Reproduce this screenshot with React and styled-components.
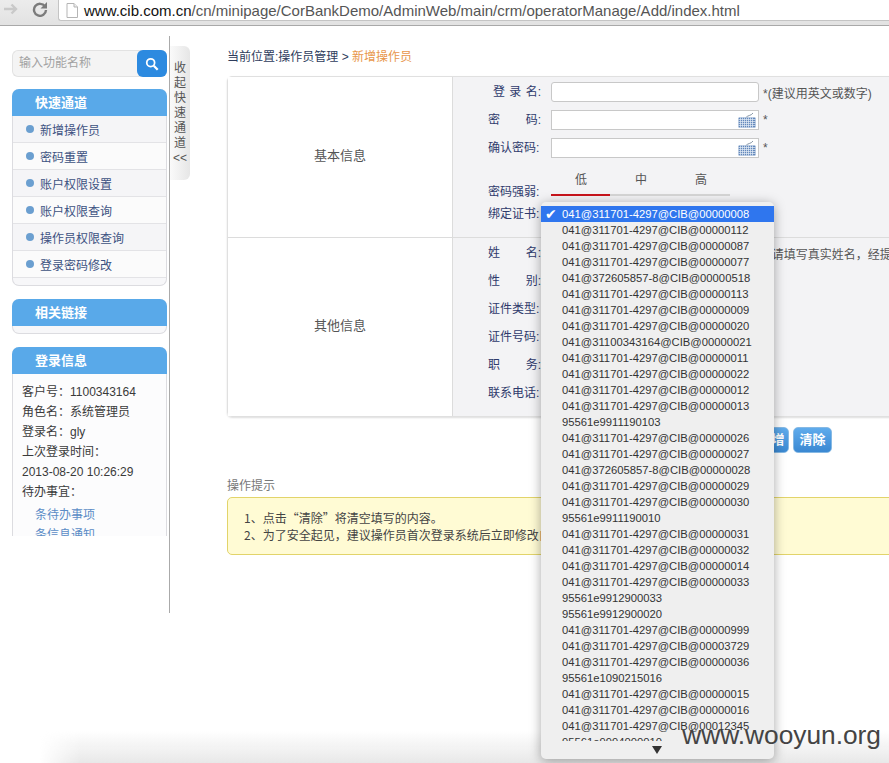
import styled, { createGlobalStyle } from "styled-components";

const quickLinks = ["新增操作员", "密码重置", "账户权限设置", "账户权限查询", "操作员权限查询", "登录密码修改"];

const loginInfo = ["客户号：1100343164", "角色名：系统管理员", "登录名：gly", "上次登录时间：", "2013-08-20 10:26:29", "待办事宜："];

const otherFields = [
  { label: "姓 名:", hint: "*(请填写真实姓名，经提交后不可修改)" },
  { label: "性 别:" },
  { label: "证件类型:" },
  { label: "证件号码:" },
  { label: "职 务:" },
  { label: "联系电话:" },
];

const certs = [
  "041@311701-4297@CIB@00000008",
  "041@311701-4297@CIB@00000112",
  "041@311701-4297@CIB@00000087",
  "041@311701-4297@CIB@00000077",
  "041@372605857-8@CIB@00000518",
  "041@311701-4297@CIB@00000113",
  "041@311701-4297@CIB@00000009",
  "041@311701-4297@CIB@00000020",
  "041@31100343164@CIB@00000021",
  "041@311701-4297@CIB@00000011",
  "041@311701-4297@CIB@00000022",
  "041@311701-4297@CIB@00000012",
  "041@311701-4297@CIB@00000013",
  "95561e9911190103",
  "041@311701-4297@CIB@00000026",
  "041@311701-4297@CIB@00000027",
  "041@372605857-8@CIB@00000028",
  "041@311701-4297@CIB@00000029",
  "041@311701-4297@CIB@00000030",
  "95561e9911190010",
  "041@311701-4297@CIB@00000031",
  "041@311701-4297@CIB@00000032",
  "041@311701-4297@CIB@00000014",
  "041@311701-4297@CIB@00000033",
  "95561e9912900033",
  "95561e9912900020",
  "041@311701-4297@CIB@00000999",
  "041@311701-4297@CIB@00003729",
  "041@311701-4297@CIB@00000036",
  "95561e1090215016",
  "041@311701-4297@CIB@00000015",
  "041@311701-4297@CIB@00000016",
  "041@311701-4297@CIB@00012345",
  "95561e9994000010",
];

function KeyboardIcon() {
  return (
    <KeyboardSvg viewBox="0 0 18 16">
      <path d="M8 5.500 C10 3 13 4 15 1" fill="none" stroke="#77899b" strokeWidth="0.9" />
      <rect x="0.5" y="5.500" width="17" height="10" rx="0.5" fill="#6388bb" />
      <path
        d="M0.5 7.500h17M0.5 9.500h17M0.5 11.500h17M0.5 13.500h17M2.500 5.500v10M4.500 5.500v10M6.500 5.500v10M8.500 5.500v10M10.500 5.500v10M12.500 5.500v10M14.500 5.500v10"
        stroke="#e4edf6"
        strokeWidth="0.7"
      />
    </KeyboardSvg>
  );
}

function Field({ label, indent, children }) {
  return (
    <FieldRow>
      <Label $indent={indent}>
        {label.split(" ").map((part) => (
          <span key={part}>{part}</span>
        ))}
      </Label>
      {children}
    </FieldRow>
  );
}

export default function App() {
  return (
    <Page>
      <GlobalStyle />
      <TopBar>
        <NavIcon viewBox="0 0 16 16" width="16" height="16">
          <path d="M1 8h12M8.500 3.500 13 8l-4.500 4.500" fill="none" stroke="#c9c9c9" strokeWidth="2.400" />
        </NavIcon>
        <NavIcon viewBox="0 0 16 16" width="16" height="16" $gap={13}>
          <path d="M13 5.500A6 6 0 1 0 14 9" fill="none" stroke="#7b7b7b" strokeWidth="2.400" />
          <path d="M15 1v6.500H8.500z" fill="#7b7b7b" />
        </NavIcon>
        <UrlBox>
          <svg viewBox="0 0 12 15" width="12" height="15">
            <path d="M1 .5h7l3.500 3.500v10.500H1z" fill="#fff" stroke="#b5b5b5" />
            <path d="M8 .5V4h3.500" fill="#eee" stroke="#b5b5b5" />
          </svg>
          <Url>
            www.cib.com.cn<span>/cn/minipage/CorBankDemo/AdminWeb/main/crm/operatorManage/Add/index.html</span>
          </Url>
        </UrlBox>
      </TopBar>

      <Body>
        <Rail>
          <RailInner>
            <SearchBox>
              <SearchText>输入功能名称</SearchText>
              <SearchButton>
                <svg viewBox="0 0 16 16" width="14" height="14">
                  <circle cx="6.500" cy="6.500" r="4.500" fill="none" stroke="#fff" strokeWidth="2" />
                  <path d="M10 10l4.500 4.500" stroke="#fff" strokeWidth="2.600" />
                </svg>
              </SearchButton>
            </SearchBox>

            <Panel>
              <PanelHead>快速通道</PanelHead>
              {quickLinks.map((link, i) => (
                <NavItem key={link} $alt={i % 2 === 0}>
                  <Dot />
                  {link}
                </NavItem>
              ))}
              <PanelFoot />
            </Panel>

            <Panel>
              <PanelHead>相关链接</PanelHead>
              <PanelFoot />
            </Panel>

            <Panel>
              <PanelHead>登录信息</PanelHead>
              <InfoList>
                {loginInfo.map((line) => (
                  <InfoLine key={line}>{line}</InfoLine>
                ))}
                <TodoLink>条待办事项</TodoLink>
                <TodoLink>条信息通知</TodoLink>
              </InfoList>
            </Panel>
          </RailInner>
        </Rail>

        <CollapseTab>
          收起快速通道
          <br />
          {"<<"}
        </CollapseTab>

        <Main>
          <Breadcrumb>
            当前位置:操作员管理 &gt; <em>新增操作员</em>
          </Breadcrumb>

          <FormTable>
            <Section>
              <SectionTitle>基本信息</SectionTitle>
              <SectionBody>
                <Field label="登 录 名:" indent={5}>
                  <Input />
                  <Hint>*(建议用英文或数字)</Hint>
                </Field>
                <Field label="密 码:">
                  <PasswordBox>
                    <KeyboardIcon />
                  </PasswordBox>
                  <Hint>*</Hint>
                </Field>
                <Field label="确认密码:">
                  <PasswordBox>
                    <KeyboardIcon />
                  </PasswordBox>
                  <Hint>*</Hint>
                </Field>
                <StrengthRow>
                  <StrengthLabel>密码强弱:</StrengthLabel>
                  <Strength>
                    <StrengthLevels>
                      <span>低</span>
                      <span>中</span>
                      <span>高</span>
                    </StrengthLevels>
                    <StrengthBar>
                      <StrengthFill style={{ width: "33%" }} />
                    </StrengthBar>
                  </Strength>
                </StrengthRow>
                <Field label="绑定证书:" />
              </SectionBody>
            </Section>
            <Section $last>
              <SectionTitle>其他信息</SectionTitle>
              <SectionBody $other>
                {otherFields.map((field) => (
                  <Field key={field.label} label={field.label}>
                    {field.hint && (
                      <>
                        <Input />
                        <Hint>{field.hint}</Hint>
                      </>
                    )}
                  </Field>
                ))}
              </SectionBody>
            </Section>
          </FormTable>

          <ButtonRow>
            <ActionButton $width={35}>新增</ActionButton>
            <ActionButton $width={39}>清除</ActionButton>
          </ButtonRow>

          <TipsTitle>操作提示</TipsTitle>
          <TipsBox>
            <p>1、点击“清除”将清空填写的内容。</p>
            <p>2、为了安全起见，建议操作员首次登录系统后立即修改自己的密码。</p>
          </TipsBox>
        </Main>
      </Body>

      <BottomFade />

      <CertMenu>
        <CertList>
          {certs.map((cert, i) => (
            <CertItem key={cert} $selected={i === 0}>
              {i === 0 && <Check>✔</Check>}
              {cert}
            </CertItem>
          ))}
        </CertList>
        <MoreArrow />
      </CertMenu>

      <Watermark>www.wooyun.org</Watermark>
    </Page>
  );
}

const GlobalStyle = createGlobalStyle`
  html, body {
    margin: 0;
    padding: 0;
    background: #fff;
    overflow: hidden;
  }
  * {
    box-sizing: border-box;
  }
  p {
    margin: 0;
  }
`;

const Page = styled.div`
  position: relative;
  width: 889px;
  height: 763px;
  overflow: hidden;
  background: #fff;
  font-family: "Liberation Sans", "Noto Sans CJK SC", sans-serif;
  font-size: 12px;
  color: #444;
`;

const TopBar = styled.div`
  display: flex;
  align-items: flex-start;
  height: 26px;
  padding-left: 3px;
  background: linear-gradient(#ececec, #e2e2e2);
  border-bottom: 1px solid #a9a9a9;
`;

const NavIcon = styled.svg`
  margin-top: 1px;
  margin-left: ${(p) => p.$gap || 0}px;
  flex: none;
`;

const UrlBox = styled.div`
  display: flex;
  align-items: center;
  gap: 6px;
  flex: 1;
  height: 21px;
  margin-left: 10px;
  padding-left: 7px;
  background: #fff;
  border-left: 1px solid #c4c4c4;
  border-bottom: 1px solid #c4c4c4;
  border-bottom-left-radius: 3px;
`;

const Url = styled.div`
  font-size: 15px;
  color: #111;
  white-space: nowrap;

  span {
    color: #555;
  }
`;

const Body = styled.div`
  display: flex;
  align-items: flex-start;
  margin-top: 10px;
`;

const Rail = styled.div`
  flex: none;
  width: 170px;
  height: 577px;
  border-right: 1px solid #aaa;
`;

const RailInner = styled.div`
  display: flex;
  flex-direction: column;
  gap: 13px;
  height: 500px;
  padding: 14px 0 0 12px;
  overflow: hidden;
`;

const SearchBox = styled.div`
  display: flex;
  flex: none;
  justify-content: space-between;
  width: 155px;
  height: 27px;
  margin-bottom: -1px;
  background: #f4f4f4;
  border: 1px solid #e2e2e2;
  border-right: 0;
  border-radius: 6px;
`;

const SearchText = styled.div`
  padding-left: 6px;
  line-height: 25px;
  color: #a2a2a2;
`;

const SearchButton = styled.div`
  display: flex;
  align-items: center;
  justify-content: center;
  width: 30px;
  height: 27px;
  margin-top: -1px;
  background: #2c8ae0;
  border-radius: 6px;
`;

const Panel = styled.div`
  flex: none;
  width: 155px;
  background: #f7f7f9;
  border: 1px solid #dcdce0;
  border-top: 0;
  border-radius: 7px;
`;

const PanelHead = styled.div`
  height: 27px;
  margin: 0 -1px;
  padding-left: 23px;
  background: #59a9e9;
  border-radius: 7px 7px 0 0;
  font-size: 13px;
  font-weight: 700;
  line-height: 27px;
  color: #fff;
`;

const PanelFoot = styled.div`
  height: 7px;
`;

const NavItem = styled.div`
  display: flex;
  align-items: center;
  gap: 6px;
  height: 27px;
  padding-left: 13px;
  background: ${(p) => (p.$alt ? "#f5f5f7" : "#fbfbfb")};
  border-bottom: 1px solid #e3e3e6;
  color: #3d5282;
`;

const Dot = styled.span`
  width: 8px;
  height: 8px;
  background: #6b9fd0;
  border-radius: 50%;
`;

const InfoList = styled.div`
  padding: 8px 0 0 9px;
  background: #fcfcfd;
`;

const InfoLine = styled.div`
  height: 20px;
  line-height: 20px;
  color: #3a3a3a;
`;

const TodoLink = styled.div`
  height: 20px;
  padding-left: 13px;
  line-height: 20px;
  color: #5b8cc6;

  ${InfoLine} + & {
    margin-top: 3px;
  }
`;

const CollapseTab = styled.div`
  flex: none;
  width: 20px;
  height: 134px;
  margin-top: 10px;
  padding-top: 15px;
  background: linear-gradient(90deg, #fafafa, #e6e6e6);
  border-radius: 0 6px 6px 0;
  font-size: 12px;
  line-height: 15px;
  text-align: center;
  color: #555;
`;

const Main = styled.div`
  flex: none;
  width: 800px;
  margin-left: 37px;
  padding-top: 13px;
`;

const Breadcrumb = styled.div`
  height: 27px;
  line-height: 16px;
  color: #2e3c5c;

  em {
    font-style: normal;
    color: #e8964a;
  }
`;

const FormTable = styled.div`
  border: 1px solid #e0e0e0;
  border-radius: 5px 0 0 5px;
  box-shadow: 0 1px 2px #ddd;
`;

const Section = styled.div`
  display: flex;
  border-bottom: ${(p) => (p.$last ? "0" : "1px solid #dcdcdc")};
`;

const SectionTitle = styled.div`
  display: flex;
  flex: none;
  align-items: center;
  justify-content: center;
  width: 225px;
  padding-bottom: 6px;
  background: #fff;
  border-right: 1px solid #dcdcdc;
  font-size: 13px;
  color: #555;
`;

const SectionBody = styled.div`
  flex: 1;
  height: ${(p) => (p.$other ? "178px" : "160px")};
  padding: 1px 0 0 35px;
  background: #f3f3f5;
`;

const FieldRow = styled.div`
  display: flex;
  align-items: center;
  height: 28px;
`;

const Label = styled.div`
  display: flex;
  flex: none;
  justify-content: space-between;
  width: 53px;
  margin: 0 10px 3px 0;
  padding-left: ${(p) => p.$indent || 0}px;
  color: #2f3a6c;
`;

const Input = styled.div`
  flex: none;
  width: 208px;
  height: 20px;
  background: #fff;
  border: 1px solid #c8c8c8;
  border-radius: 3px;
`;

const PasswordBox = styled(Input)`
  display: flex;
  align-items: center;
  justify-content: flex-end;
  padding-right: 2px;
  border-radius: 0;
`;

const KeyboardSvg = styled.svg`
  width: 18px;
  height: 16px;
`;

const Hint = styled.div`
  margin-left: 4px;
  white-space: nowrap;
  color: #555;
`;

const StrengthRow = styled.div`
  display: flex;
  align-items: flex-end;
  height: 38px;
  padding-bottom: 4px;
`;

const StrengthLabel = styled(Label)`
  margin-bottom: -3px;
`;

const Strength = styled.div`
  width: 179px;
`;

const StrengthLevels = styled.div`
  display: grid;
  grid-template-columns: repeat(3, 60px);
  margin-bottom: 7px;
  text-align: center;
  color: #555;
`;

const StrengthBar = styled.div`
  height: 2px;
  background: #d6d6d6;
`;

const StrengthFill = styled.div`
  height: 2px;
  background: #c8141c;
`;

const ButtonRow = styled.div`
  display: flex;
  gap: 4px;
  margin-top: 10px;
  padding-left: 527px;
`;

const ActionButton = styled.div`
  width: ${(p) => p.$width}px;
  height: 26px;
  background: linear-gradient(#5fabec, #3a88d2);
  border: 1px solid #86b9e4;
  border-radius: 5px;
  font-size: 13px;
  font-weight: 700;
  line-height: 24px;
  text-align: center;
  color: #fff;
`;

const TipsTitle = styled.div`
  margin-top: 26px;
  line-height: 14px;
  color: #777;
`;

const TipsBox = styled.div`
  height: 58px;
  margin-top: 4px;
  padding: 11px 0 0 16px;
  background: #fffbd4;
  border: 1px solid #e2d46a;
  border-radius: 5px 0 0 5px;
  font-family: "Noto Sans CJK SC", "Liberation Sans", sans-serif;
  line-height: 17px;
  color: #444;
`;

const CertMenu = styled.div`
  position: absolute;
  top: 202px;
  left: 541px;
  width: 233px;
  height: 557px;
  padding-top: 4px;
  background: #efefef;
  border-radius: 5px;
  box-shadow: 0 2px 12px rgb(0 0 0 / 0.35);
`;

const CertList = styled.div`
  height: 535px;
  overflow: hidden;
`;

const CertItem = styled.div`
  position: relative;
  height: 16px;
  padding-left: 21px;
  background: ${(p) => (p.$selected ? "#2f76ee" : "transparent")};
  font-size: 11.25px;
  line-height: 16px;
  white-space: nowrap;
  color: ${(p) => (p.$selected ? "#fff" : "#333")};
`;

const Check = styled.span`
  position: absolute;
  left: 4px;
  font-family: "DejaVu Sans", sans-serif;
  font-size: 14px;
`;

const MoreArrow = styled.div`
  width: 0;
  height: 0;
  margin: 5px 0 0 111px;
  border-top: 8px solid #333;
  border-left: 5px solid transparent;
  border-right: 5px solid transparent;
`;

const BottomFade = styled.div`
  position: absolute;
  left: 0;
  right: 0;
  bottom: 0;
  height: 32px;
  background: linear-gradient(rgb(232 232 232 / 0), rgb(232 232 232 / 1));
  mask-image: linear-gradient(90deg, transparent 40px, #000 80px);
  pointer-events: none;
`;

const Watermark = styled.div`
  position: absolute;
  right: 8px;
  bottom: 13px;
  font-size: 26.3px;
  line-height: 30px;
  color: #444;
`;
